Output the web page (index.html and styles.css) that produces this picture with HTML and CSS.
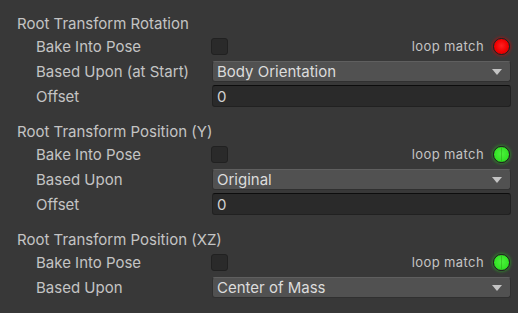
FILE: index.html
```html
<!DOCTYPE html>
<html>
<head>
<meta charset="utf-8">
<link rel="stylesheet" href="styles.css">
</head>
<body>
<div class="inspector">
  <section class="group">
    <div class="header">Root Transform Rotation</div>
    <div class="row">
      <span class="label">Bake Into Pose</span>
      <div class="control">
        <span class="checkbox"></span>
        <span class="match">loop match</span>
        <span class="led red"></span>
      </div>
    </div>
    <div class="row">
      <span class="label">Based Upon (at Start)</span>
      <div class="control"><div class="dropdown"><span>Body Orientation</span><span class="arrow"></span></div></div>
    </div>
    <div class="row">
      <span class="label">Offset</span>
      <div class="control"><div class="field">0</div></div>
    </div>
  </section>

  <section class="group">
    <div class="header">Root Transform Position (Y)</div>
    <div class="row">
      <span class="label">Bake Into Pose</span>
      <div class="control">
        <span class="checkbox"></span>
        <span class="match">loop match</span>
        <span class="led green"></span>
      </div>
    </div>
    <div class="row">
      <span class="label">Based Upon</span>
      <div class="control"><div class="dropdown"><span>Original</span><span class="arrow"></span></div></div>
    </div>
    <div class="row">
      <span class="label">Offset</span>
      <div class="control"><div class="field">0</div></div>
    </div>
  </section>

  <section class="group">
    <div class="header">Root Transform Position (XZ)</div>
    <div class="row">
      <span class="label">Bake Into Pose</span>
      <div class="control">
        <span class="checkbox"></span>
        <span class="match">loop match</span>
        <span class="led green"></span>
      </div>
    </div>
    <div class="row">
      <span class="label">Based Upon</span>
      <div class="control"><div class="dropdown"><span>Center of Mass</span><span class="arrow"></span></div></div>
    </div>
  </section>

  <div class="row top">
    <span class="label"></span>
    <div class="control"><span class="checkbox"></span></div>
  </div>
</div>
</body>
</html>
```

FILE: styles.css
```css
html, body {
  margin: 0;
  padding: 0;
  background: #383838;
  overflow: hidden;
}
body {
  font-family: Inter, "Noto Sans", sans-serif;
  font-size: 15px;
  color: #c4c4c4;
}
.inspector {
  display: flex;
  flex-direction: column;
  gap: 13px;
  padding: 12px 7px 0 17px;
}
.group {
  display: flex;
  flex-direction: column;
  gap: 3px;
}
.header {
  height: 20px;
  line-height: 23px;
}
.row {
  display: flex;
  align-items: center;
  height: 22px;
  padding-left: 19px;
}
.row.top { align-items: flex-start; }
.label {
  width: 176px;
  flex: none;
  white-space: nowrap;
}
.control {
  flex: 1;
  display: flex;
  align-items: center;
  height: 22px;
}
.checkbox {
  width: 15px;
  height: 15px;
  background: #2a2a2a;
  border: 1px solid #212121;
  border-radius: 3px;
  flex: none;
  margin-left: -1px;
}
.match {
  margin-left: auto;
  margin-right: 9px;
  font-size: 13px;
  letter-spacing: 0.4px;
}
.led {
  width: 17px;
  height: 17px;
  border-radius: 50%;
  margin-right: 1px;
  box-sizing: border-box;
  border: 1px solid #202020;
}
.led.red {
  background: radial-gradient(circle at 50% 45%, #ff2020 0%, #f00000 55%, #c80000 100%);
  box-shadow: 0 0 3px 1px rgba(230, 0, 0, 0.55);
}
.led.green {
  background:
    linear-gradient(90deg, transparent 7px, rgba(40,160,20,0.5) 7px, rgba(40,160,20,0.5) 8px, transparent 8px),
    radial-gradient(circle at 50% 45%, #4cf23c 0%, #34e326 60%, #22c018 100%);
  box-shadow: 0 0 3px 1px rgba(40, 200, 30, 0.5);
}
.dropdown {
  flex: 1;
  height: 21px;
  margin-top: 1px;
  align-self: flex-start;
  box-sizing: border-box;
  background: #515151;
  border: 1px solid #303030;
  border-top-color: #5f5f5f;
  border-radius: 3px;
  display: flex;
  align-items: center;
  justify-content: space-between;
  padding: 0 8px 0 4px;
  color: #dcdcdc;
}
.arrow {
  width: 0;
  height: 0;
  border-left: 5px solid transparent;
  border-right: 5px solid transparent;
  border-top: 6px solid #c4c4c4;
}
.field {
  flex: 1;
  height: 22px;
  box-sizing: border-box;
  background: #2a2a2a;
  border: 1px solid #212121;
  border-top-color: #0d0d0d;
  border-radius: 3px;
  display: flex;
  align-items: center;
  padding: 0 4px;
  color: #d2d2d2;
}
```
